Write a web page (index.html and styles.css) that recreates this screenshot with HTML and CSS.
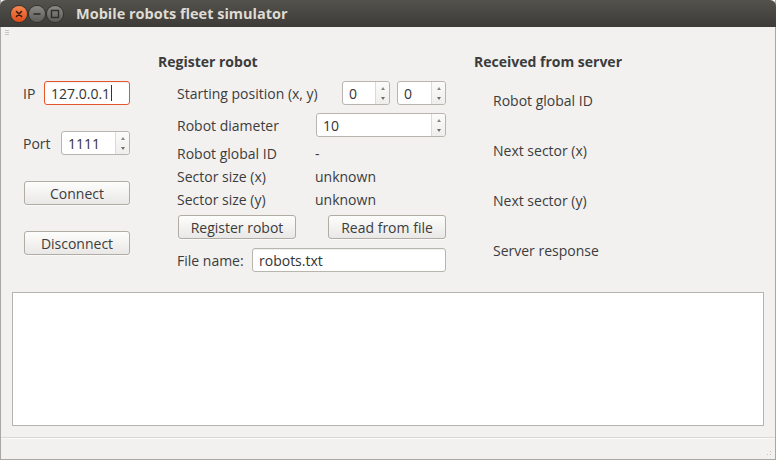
FILE: index.html
```html
<!DOCTYPE html>
<html>
<head>
<meta charset="utf-8">
<link rel="stylesheet" href="styles.css">
</head>
<body>
<div class="window">
  <div class="titlebar">
    <div class="wbtns">
      <span class="wbtn close"><svg width="16" height="16" viewBox="0 0 16 16"><path d="M5.5 5.5 L10.5 10.5 M10.5 5.5 L5.5 10.5" stroke="#3a1a0c" stroke-width="1.6" stroke-linecap="round"/></svg></span>
      <span class="wbtn"><svg width="16" height="16" viewBox="0 0 16 16"><path d="M4.5 8 H11.5" stroke="#2e2d2a" stroke-width="1.6"/></svg></span>
      <span class="wbtn"><svg width="16" height="16" viewBox="0 0 16 16"><rect x="4.5" y="4.5" width="7" height="7" fill="none" stroke="#2e2d2a" stroke-width="1.4"/></svg></span>
    </div>
    <div class="title">Mobile robots fleet simulator</div>
  </div>
  <div class="body">
    <div class="grip"><i></i><i></i><i></i></div>
    <div class="main">
      <div class="col left">
        <div class="row"><span class="lbl">IP</span><span class="field focus ip">127.0.0.1<span class="caret"></span></span></div>
        <div class="row"><span class="lbl">Port</span><span class="spin port"><span class="val">1111</span><span class="arrows"><i class="up"></i><i class="dn"></i></span></span></div>
        <div class="row"><span class="btn wide">Connect</span></div>
        <div class="row"><span class="btn wide">Disconnect</span></div>
      </div>
      <div class="col mid">
        <div class="head">Register robot</div>
        <div class="inner">
          <div class="row r1"><span class="lbl w165">Starting position (x, y)</span><span class="spin s48"><span class="val">0</span><span class="arrows"><i class="up"></i><i class="dn"></i></span></span><span class="spin s49"><span class="val">0</span><span class="arrows"><i class="up"></i><i class="dn"></i></span></span></div>
          <div class="row r2"><span class="lbl w139">Robot diameter</span><span class="spin s130"><span class="val">10</span><span class="arrows"><i class="up"></i><i class="dn"></i></span></span></div>
          <div class="trow first"><span class="lbl w138">Robot global ID</span><span>-</span></div>
          <div class="trow"><span class="lbl w138">Sector size (x)</span><span>unknown</span></div>
          <div class="trow"><span class="lbl w138">Sector size (y)</span><span>unknown</span></div>
          <div class="row r3"><span class="btn b118">Register robot</span><span class="btn b118">Read from file</span></div>
          <div class="row r4"><span class="lbl w75">File name:</span><span class="field fname">robots.txt</span></div>
        </div>
      </div>
      <div class="col right">
        <div class="head">Received from server</div>
        <div class="items">
          <div>Robot global ID</div>
          <div>Next sector (x)</div>
          <div>Next sector (y)</div>
          <div>Server response</div>
        </div>
      </div>
    </div>
    <div class="log"></div>
    <div class="status"><span class="rgrip"></span></div>
  </div>
</div>
</body>
</html>
```
FILE: styles.css
```css
* { box-sizing: border-box; }
html, body { margin: 0; padding: 0; }
body {
  width: 776px; height: 460px; overflow: hidden;
  background: #f2f1f0;
  font-family: "Open Sans", "Noto Sans", sans-serif;
  font-size: 14px;
  color: #3c3c3c;
}
.window {
  width: 776px; height: 460px;
  display: flex; flex-direction: column;
  border-left: 1px solid #a9a7a2; border-right: 1px solid #a9a7a2; border-bottom: 1px solid #a9a7a2;
}
.titlebar {
  height: 27px; flex: none;
  margin: 0 -1px;
  background: linear-gradient(#53524d, #3c3b37);
  border-radius: 6px 6px 0 0;
  display: flex; align-items: center;
}
.wbtns { display: flex; gap: 2px; padding-left: 11px; }
.wbtn {
  width: 16px; height: 16px; border-radius: 50%;
  background: linear-gradient(#8a8984, #5d5c58);
  box-shadow: 0 0 0 1px #34332f;
  display: flex; align-items: center; justify-content: center;
}
.wbtns .wbtn:nth-child(1) { background: linear-gradient(#f7884f, #de4b1a); }
.title {
  margin-left: 13px;
  color: #dfdbd2; font-weight: bold; font-size: 14.5px;
  font-family: "Open Sans", sans-serif;
}
.body { flex: 1; display: flex; flex-direction: column; position: relative; }
.grip { position: absolute; left: 4px; top: 3px; display: flex; flex-direction: column; gap: 1px; }
.grip i { display: block; width: 4px; height: 1px; background: #c8c6c1; }
.main { height: 265px; display: flex; }
.col { display: flex; flex-direction: column; }
.left { width: 134px; padding-left: 22px; padding-top: 54px; gap: 26px; }
.row { display: flex; align-items: center; height: 24px; }
.lbl { flex: none; }
.left .row .lbl { width: 21px; }
.left .row:nth-child(2) .lbl { width: 38px; }
.field {
  height: 24px; border: 1px solid #b8b5ae; border-radius: 3px; background: #fff;
  padding: 0 6px; display: flex; align-items: center; color: #333;
  box-shadow: inset 0 1px 1px rgba(0,0,0,0.06);
}
.field.focus { border-color: #e5562a; }
.ip { width: 86px; }
.caret { display: inline-block; width: 1px; height: 16px; background: #333; margin-left: 1px; }
.spin {
  height: 24px; border: 1px solid #b8b5ae; border-radius: 3px; background: #fff;
  display: flex; color: #333;
}
.spin .val { flex: 1; padding-left: 6px; display: flex; align-items: center; }
.spin .arrows {
  width: 14px; border-left: 1px solid #dcdad5; background: linear-gradient(#fbfbfa, #efeeec);
  display: flex; flex-direction: column; align-items: center; justify-content: center; gap: 7px;
  border-radius: 0 3px 3px 0;
}
.spin .arrows i { display: block; width: 0; height: 0; border-left: 2px solid transparent; border-right: 2px solid transparent; }
.spin .arrows .up { border-bottom: 3px solid #8a8884; }
.spin .arrows .dn { border-top: 3px solid #6f6d69; }
.port { width: 69px; }
.btn {
  height: 24px; border: 1px solid #b1ada4; border-radius: 3px;
  background: linear-gradient(#fdfdfc, #e9e8e6);
  display: flex; align-items: center; justify-content: center; color: #3c3c3c;
  box-shadow: 0 1px 0 rgba(255,255,255,0.6);
}
.wide { width: 106px; margin-left: 1px; }
.mid { width: 316px; padding-left: 23px; }
.head { font-weight: bold; height: 20px; line-height: 20px; margin-top: 25px; }
.inner { padding-left: 19px; padding-top: 9px; display: flex; flex-direction: column; }
.w165 { width: 165px; }
.w139 { width: 139px; }
.w138 { width: 138px; }
.w75 { width: 75px; }
.s48 { width: 48px; }
.s49 { width: 49px; margin-left: 7px; }
.s130 { width: 130px; }
.r2 { margin-top: 8px; }
.trow { display: flex; height: 23px; align-items: center; }
.trow.first { margin-top: 5px; }
.r3 { margin-top: 4px; justify-content: space-between; width: 269px; padding-left: 1px; }
.b118 { width: 118px; }
.r4 { margin-top: 9px; }
.fname { width: 194px; }
.right { padding-left: 23px; }
.items { padding-left: 19px; display: flex; flex-direction: column; }
.items div { height: 20px; line-height: 20px; margin-top: 30px; }
.items div:first-child { margin-top: 19px; }
.log {
  margin: 0 11px 0 11px; height: 134px; background: #fff;
  border: 1px solid #b5b3ae;
}
.status {
  margin-top: 11px; flex: 1;
  border-top: 1px solid #d9d7d3; box-shadow: inset 0 1px 0 #fbfbfa;
  position: relative;
}
.rgrip {
  position: absolute; right: 2px; bottom: 2px; width: 10px; height: 10px;
  background-image: radial-gradient(circle, #c4c2bd 0.8px, transparent 1px);
  background-size: 3px 3px;
  clip-path: polygon(100% 0, 100% 100%, 0 100%);
}
```
